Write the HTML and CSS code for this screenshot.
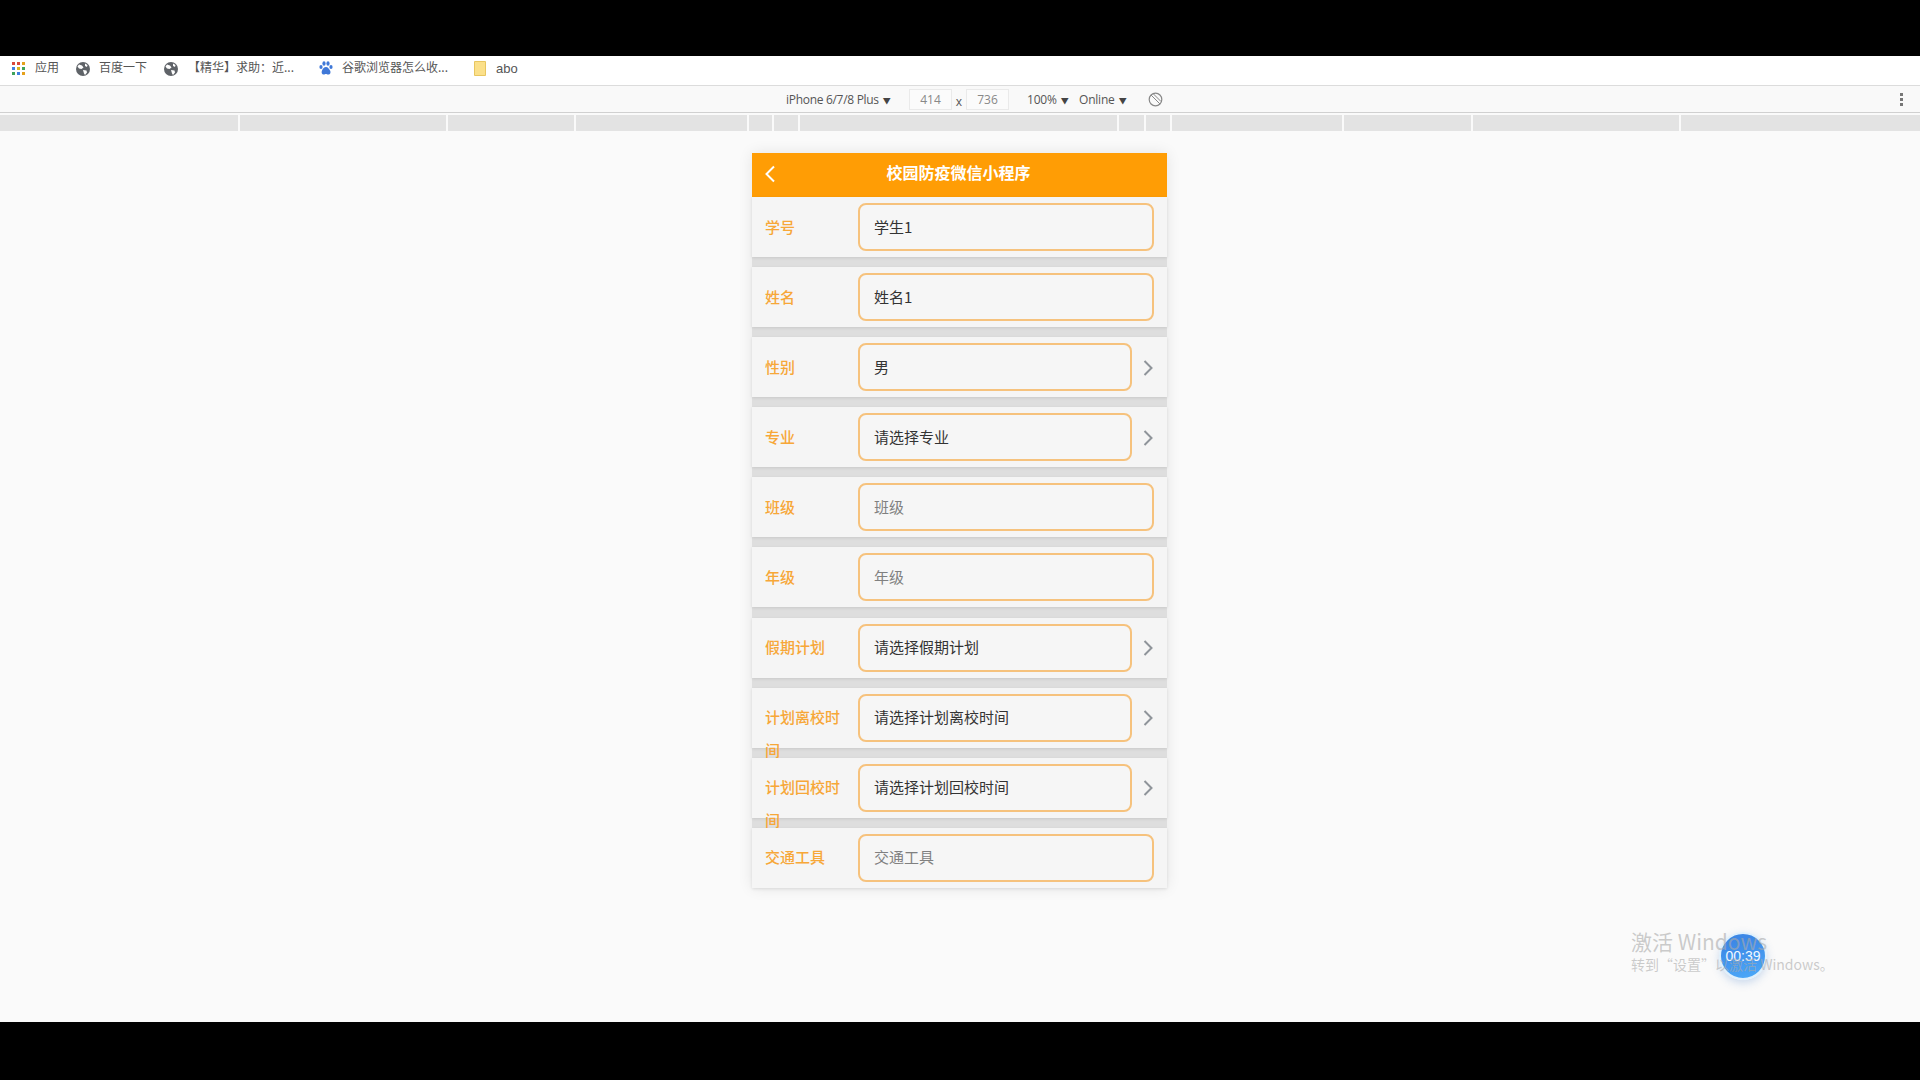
FILE: index.html
```html
<!DOCTYPE html>
<html lang="zh">
<head>
<meta charset="utf-8">
<title>校园防疫微信小程序</title>
<link rel="stylesheet" href="styles.css">
</head>
<body>
<div class="letterbox-top"></div>
<nav class="bookmarks">
  <a class="bm bm-apps"><svg class="ic-apps" width="14" height="14" viewBox="0 0 14 14"><g><rect x="0" y="0" width="3" height="3" fill="#d9493b"/><rect x="5" y="0" width="3" height="3" fill="#d9493b"/><rect x="10" y="0" width="3" height="3" fill="#e5a11c"/><rect x="0" y="5" width="3" height="3" fill="#3f7fe0"/><rect x="5" y="5" width="3" height="3" fill="#d9b51c"/><rect x="10" y="5" width="3" height="3" fill="#3fa35a"/><rect x="0" y="10" width="3" height="3" fill="#3fa35a"/><rect x="5" y="10" width="3" height="3" fill="#3f7fe0"/><rect x="10" y="10" width="3" height="3" fill="#e5a11c"/></g></svg><span>应用</span></a>
  <a class="bm bm-b"><svg width="14" height="14" viewBox="0 0 14 14"><circle cx="7" cy="7" r="7" fill="#5f6368"/><path d="M3 2.500l3 1 1.500 2-2 1.500-2.500-.5-1.500-2zM7 8l3.500.5.500 2-2 2.500-1-1.500zM9 1.500l2.500 1.500-.5 2-2-1z" fill="#fff"/></svg><span>百度一下</span></a>
  <a class="bm bm-c"><svg width="14" height="14" viewBox="0 0 14 14"><circle cx="7" cy="7" r="7" fill="#5f6368"/><path d="M3 2.500l3 1 1.500 2-2 1.500-2.500-.5-1.500-2zM7 8l3.500.5.500 2-2 2.500-1-1.500zM9 1.500l2.500 1.500-.5 2-2-1z" fill="#fff"/></svg><span>【精华】求助：近...</span></a>
  <a class="bm bm-d"><svg width="14" height="15" viewBox="0 0 14 15"><g fill="#3f78d8"><ellipse cx="2" cy="6" rx="1.600" ry="2.100"/><ellipse cx="5" cy="2.500" rx="1.600" ry="2.200"/><ellipse cx="9" cy="2.500" rx="1.600" ry="2.200"/><ellipse cx="12" cy="6" rx="1.600" ry="2.100"/><path d="M7 6c2 0 3 2 4 3.500s.5 4-1.500 4-1.500-.5-2.500-.5-1 .5-2.500.5-2.500-2-1.500-4S5 6 7 6z"/></g></svg><span>谷歌浏览器怎么收...</span></a>
  <a class="bm bm-e"><svg width="12" height="15" viewBox="0 0 12 15"><path d="M0.500 0.500h11v14h-11z" fill="#fbe08a" stroke="#e8c660"/></svg><span>abo</span></a>
</nav>
<div class="devbar">
  <span class="dev-device">iPhone 6/7/8 Plus<i class="caret">▼</i></span>
  <span class="dev-box">414</span>
  <span class="dev-x">x</span>
  <span class="dev-box">736</span>
  <span class="dev-zoom">100%<i class="caret">▼</i></span>
  <span class="dev-net">Online<i class="caret">▼</i></span>
  <svg class="dev-rotate" width="15" height="15" viewBox="0 0 15 15"><circle cx="7.500" cy="7.500" r="6.300" fill="none" stroke="#888" stroke-width="1.200"/><path d="M3 3l9 9M5.500 2l7.500 7.500" stroke="#888" stroke-width="1" fill="none"/></svg>
  <span class="dev-more"><b></b><b></b><b></b></span>
</div>
<div class="ruler"><i></i><i></i><i></i><i></i><i></i><i></i><i></i><i></i><i></i><i></i><i></i><i></i><i></i></div>
<main class="viewport">
  <section class="phone">
    <header class="nav">
      <svg class="nav-back" width="12" height="18" viewBox="0 0 12 18"><path d="M10 1.500L2.500 9l7.500 7.500" fill="none" stroke="#fff" stroke-width="2"/></svg>
      <h1 class="nav-title">校园防疫微信小程序</h1>
    </header>
    <div class="form">
      <div class="row"><label class="lbl">学号</label><div class="field val">学生1</div></div>
      <div class="row"><label class="lbl">姓名</label><div class="field val">姓名1</div></div>
      <div class="row"><label class="lbl">性别</label><div class="field val">男</div><svg class="chev" width="10" height="18" viewBox="0 0 10 18"><path d="M1.500 2L8.500 9l-7 7" fill="none" stroke="#8f949a" stroke-width="2"/></svg></div>
      <div class="row"><label class="lbl">专业</label><div class="field val">请选择专业</div><svg class="chev" width="10" height="18" viewBox="0 0 10 18"><path d="M1.500 2L8.500 9l-7 7" fill="none" stroke="#8f949a" stroke-width="2"/></svg></div>
      <div class="row"><label class="lbl">班级</label><div class="field ph">班级</div></div>
      <div class="row"><label class="lbl">年级</label><div class="field ph">年级</div></div>
      <div class="row"><label class="lbl">假期计划</label><div class="field val">请选择假期计划</div><svg class="chev" width="10" height="18" viewBox="0 0 10 18"><path d="M1.500 2L8.500 9l-7 7" fill="none" stroke="#8f949a" stroke-width="2"/></svg></div>
      <div class="row"><label class="lbl">计划离校时间</label><div class="field val">请选择计划离校时间</div><svg class="chev" width="10" height="18" viewBox="0 0 10 18"><path d="M1.500 2L8.500 9l-7 7" fill="none" stroke="#8f949a" stroke-width="2"/></svg></div>
      <div class="row"><label class="lbl">计划回校时间</label><div class="field val">请选择计划回校时间</div><svg class="chev" width="10" height="18" viewBox="0 0 10 18"><path d="M1.500 2L8.500 9l-7 7" fill="none" stroke="#8f949a" stroke-width="2"/></svg></div>
      <div class="row"><label class="lbl">交通工具</label><div class="field ph">交通工具</div></div>
    </div>
  </section>
  <div class="timer">00:39</div>
  <div class="watermark">
    <div class="wm-1">激活 Windows</div>
    <div class="wm-2">转到“设置”以激活 Windows。</div>
  </div>
</main>
<div class="letterbox-bottom"></div>
</body>
</html>
```
FILE: styles.css
```css
* { box-sizing: border-box; }
html, body { margin: 0; padding: 0; }
body {
  width: 1920px;
  height: 1080px;
  overflow: hidden;
  display: flex;
  flex-direction: column;
  font-family: "Noto Sans CJK SC", "Liberation Sans", sans-serif;
  background: #000;
}
.letterbox-top { height: 56px; background: #000; flex: none; }
.letterbox-bottom { height: 58px; background: #000; flex: none; }

.bookmarks {
  height: 30px;
  flex: none;
  background: #fff;
  border-bottom: 1px solid #dcdcdc;
  display: flex;
  align-items: center;
  padding: 0 0 0 12px;
  font-size: 12px;
  color: #555;
}
.bm { display: flex; align-items: center; white-space: nowrap; }
.bm span { position: relative; top: -4px; }
.bm svg { position: relative; top: -2px; }
.bm-apps { gap: 9px; width: 64px; }
.bm-b { gap: 9px; width: 88px; }
.bm-c { gap: 10px; width: 155px; }
.bm-d { gap: 9px; width: 155px; }
.bm-e { gap: 10px; font-family: "Liberation Sans", sans-serif; font-size: 13px; }
.bm-e span { top: -2px; }

.devbar {
  height: 27px;
  flex: none;
  background: #f9f9f9;
  border-bottom: 1px solid #d0d0d0;
  display: flex;
  align-items: center;
  padding-left: 786px;
  font-size: 12px;
  color: #555;
  font-family: "Open Sans", "Noto Sans CJK SC", sans-serif;
  position: relative;
}
.caret { font-style: normal; font-size: 8px; margin-left: 4px; color: #444; }
.dev-device { width: 123px; white-space: nowrap; letter-spacing: -0.3px; }
.dev-box {
  width: 43px;
  height: 21px;
  background: #fbfbfb;
  border: 1px solid #eaeaea;
  color: #888;
  display: flex;
  align-items: center;
  justify-content: center;
}
.dev-x { width: 14px; text-align: center; color: #555; position: relative; top: 2px; }
.dev-zoom { width: 52px; margin-left: 18px; white-space: nowrap; letter-spacing: -0.2px; }
.dev-net { width: 69px; white-space: nowrap; letter-spacing: -0.2px; }
.dev-rotate { flex: none; }
.dev-more {
  position: absolute;
  right: 16px;
  top: 7px;
  width: 4px;
  display: flex;
  flex-direction: column;
  gap: 2px;
}
.dev-more b { width: 3px; height: 3px; background: #777; display: block; }

.ruler {
  height: 18px;
  flex: none;
  background: #fafafa;
  padding: 2px 0 0;
  display: grid;
  grid-template-columns: 238px 206px 126px 171px 23px 24px 317px 25px 24px 170px 127px 206px 1fr;
  column-gap: 2px;
}
.ruler i { background: #e3e3e3; display: block; }

.viewport {
  flex: 1;
  background: #fafafa;
  position: relative;
  display: flex;
  justify-content: center;
  align-items: flex-start;
  padding: 22px 1px 0 0;
}
.phone {
  width: 415px;
  background: #dedede;
  box-shadow: 0 0 14px rgba(0, 0, 0, 0.09);
}
.nav {
  height: 44px;
  background: #ff9d05;
  display: flex;
  align-items: center;
  justify-content: center;
  position: relative;
  padding: 0 2px 5px 0;
}
.nav-back { position: absolute; left: 12px; top: 12px; }
.nav-title { margin: 0; font-size: 16px; font-weight: 700; color: #fff; line-height: 39px; }

.form { display: flex; flex-direction: column; gap: 10.100px; background: #dedede; }
.row {
  height: 60px;
  background: #f5f5f5;
  display: flex;
  align-items: center;
  padding: 0 13px;
  box-shadow: 0 1px 3px rgba(0, 0, 0, 0.1);
  position: relative;
}
.lbl {
  width: 93px;
  height: 33px;
  flex: none;
  margin-top: -2px;
  padding-right: 16px;
  font-size: 15px;
  font-weight: 500;
  line-height: 33px;
  color: #f7a738;
  position: relative;
  z-index: 2;
}
.field {
  flex: 1;
  height: 48px;
  border: 2px solid #f6c27d;
  border-radius: 8px;
  padding: 0 0 2px 14px;
  display: flex;
  align-items: center;
  font-size: 15px;
  background: #f6f6f6;
}
.val { color: #333; }
.ph { color: #808080; }
.chev { flex: none; margin-left: 11px; margin-right: 1px; margin-top: 1px; }

.watermark {
  position: absolute;
  left: 1631px;
  top: 796px;
  color: rgba(170, 170, 170, 0.6);
  white-space: nowrap;
}
.wm-1 { font-size: 21px; line-height: 28px; }
.wm-2 { font-size: 14px; line-height: 19px; }
.timer {
  position: absolute;
  left: 1719px;
  top: 801px;
  width: 48px;
  height: 48px;
  border-radius: 50%;
  background: linear-gradient(165deg, #3d88e6 20%, #4aa6f7 90%);
  border: 2px solid #dff0fc;
  box-shadow: 0 3px 8px rgba(60, 120, 200, 0.25);
  color: #f2f8ff;
  font-size: 14px;
  font-family: "Liberation Sans", sans-serif;
  display: flex;
  align-items: center;
  justify-content: center;
}
```
